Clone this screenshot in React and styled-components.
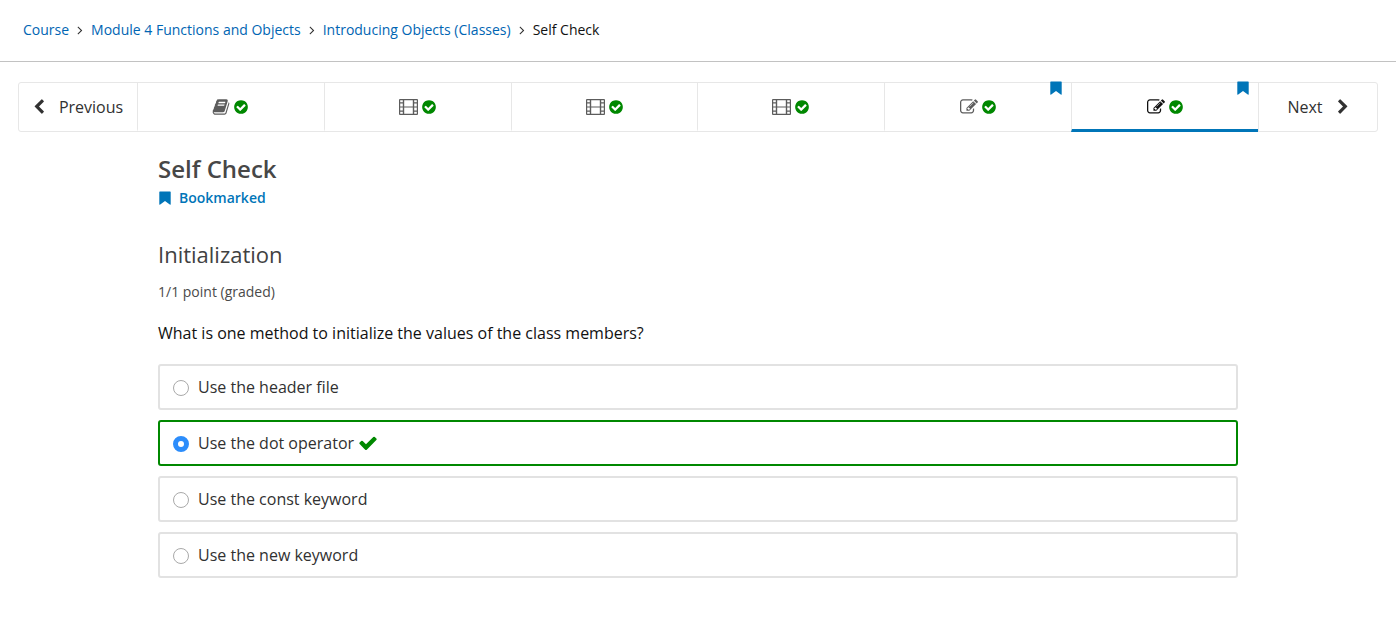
import React, { useState } from "react";
import styled, { createGlobalStyle } from "styled-components";

const GlobalStyle = createGlobalStyle`
  *, *::before, *::after { box-sizing: border-box; }
  body {
    margin: 0;
    background: #fff;
    color: #313131;
    font-family: "Open Sans", "Liberation Sans", sans-serif;
    font-size: 16px;
    line-height: 24px;
  }
`;

const PATHS = {
  check:
    "M1671 566q0 40-28 68l-724 724-136 136q-28 28-68 28t-68-28l-136-136-362-362q-28-28-28-68t28-68l136-136q28-28 68-28t68 28l294 295 656-657q28-28 68-28t68 28l136 136q28 28 28 68z",
  checkCircle:
    "M1412 734q0-28-18-46l-91-90q-19-19-45-19t-45 19l-408 407-226-226q-19-19-45-19t-45 19l-91 90q-18 18-18 46 0 27 18 45l362 362q19 19 45 19 27 0 46-19l543-543q18-18 18-45zm252 162q0 209-103 385.5t-279.5 279.5-385.5 103-385.5-103-279.5-279.5-103-385.5 103-385.5 279.5-279.5 385.5-103 385.5 103 279.5 279.5 103 385.5z",
  chevronLeft:
    "M1427 301l-531 531 531 531q19 19 19 45t-19 45l-166 166q-19 19-45 19t-45-19l-742-742q-19-19-19-45t19-45l742-742q19-19 45-19t45 19l166 166q19 19 19 45t-19 45z",
  chevronRight:
    "M1363 877l-742 742q-19 19-45 19t-45-19l-166-166q-19-19-19-45t19-45l531-531-531-531q-19-19-19-45t19-45l166-166q19-19 45-19t45 19l742 742q19 19 19 45t-19 45z",
  angleRight:
    "M1171 960q0 13-10 23l-466 466q-10 10-23 10t-23-10l-50-50q-10-10-10-23t10-23l393-393-393-393q-10-10-10-23t10-23l50-50q10-10 23-10t23 10l466 466q10 10 10 23z",
  edit:
    "M888 1184l116-116-152-152-116 116v56h96v96h56zm440-720q-16-16-33 1l-350 350q-17 17-1 33t33-1l350-350q17-17 1-33zm80 594v190q0 119-84.5 203.5t-203.5 84.5h-832q-119 0-203.5-84.5t-84.5-203.5v-832q0-119 84.5-203.5t203.5-84.5h832q63 0 117 25 15 7 18 23 3 17-9 29l-49 49q-14 14-32 8-23-6-45-6h-832q-66 0-113 47t-47 113v832q0 66 47 113t113 47h832q66 0 113-47t47-113v-126q0-13 9-22l64-64q15-15 35-7t20 29zm-96-738l288 288-672 672h-288v-288zm444 132l-92 92-288-288 92-92q28-28 68-28t68 28l152 152q28 28 28 68t-28 68z",
  book:
    "M1703 478q40 57 18 129l-275 906q-19 64-76.5 107.5t-122.5 43.5h-923q-77 0-148.5-53.5t-99.5-131.5q-24-67-2-127 0-4 3-27t4-37q1-8-3-21.5t-3-19.5q2-11 8-21t16.5-23.5 16.5-23.5q23-38 45-91.5t30-91.5q3-10 .5-30t-.5-28q3-11 17-28t17-23q21-36 42-92t25-90q1-9-2.5-32t.5-28q4-13 22-30.5t22-22.5q19-26 42.5-84.5t27.5-96.5q1-8-3-25.5t-2-26.5q2-8 9-18t18-23 17-21q8-12 16.5-30.5t15-35 16-36 19.5-32 26.5-23.5 36-11.5 47.5 5.5l-1 3q38-9 51-9h761q74 0 114 56t18 130l-274 906q-36 119-71.5 153.5t-128.5 34.5h-869q-27 0-38 15-11 16-1 43 24 70 144 70h923q29 0 56-15.5t35-41.5l300-987q7-22 5-57 38 15 59 43zm-1064 2q-4 13 2 22.5t20 9.5h608q13 0 25.5-9.5t16.5-22.5l21-64q4-13-2-22.5t-20-9.5h-608q-13 0-25.5 9.5t-16.5 22.5zm-83 256q-4 13 2 22.5t20 9.5h608q13 0 25.5-9.5t16.5-22.5l21-64q4-13-2-22.5t-20-9.5h-608q-13 0-25.5 9.5t-16.5 22.5z",
};

const Svg = styled.svg`
  display: block;
  flex: none;
  fill: currentColor;
`;

function Glyph({ name, size = 16 }) {
  return (
    <Svg width={size} height={size} viewBox="0 0 1792 1792" aria-hidden="true">
      <path d={PATHS[name]} />
    </Svg>
  );
}

function FilmIcon() {
  return (
    <Svg width="19" height="18" viewBox="0 0 19 18" aria-hidden="true">
      <path
        fillRule="evenodd"
        d="M1 1h17a1 1 0 0 1 1 1v14a1 1 0 0 1-1 1H1a1 1 0 0 1-1-1V2a1 1 0 0 1 1-1zM5.2 2.2v6.2h8.6V2.2zM5.2 9.6v6.2h8.6V9.6zM1.2 2.2v2h2.6v-2zM1.2 5.4v3h2.6v-3zM1.2 9.6v3h2.6v-3zM1.2 13.8v2h2.6v-2zM15.2 2.2v2h2.6v-2zM15.2 5.4v3h2.6v-3zM15.2 9.6v3h2.6v-3zM15.2 13.8v2h2.6v-2z"
      />
    </Svg>
  );
}

function BookmarkIcon() {
  return (
    <Svg width="12" height="14" viewBox="0 0 12 14" aria-hidden="true">
      <path d="M.9.4h10.2q.6 0 .6.6v12.3q0 .6-.6.4L6 9.9.9 13.7q-.6.2-.6-.4V1Q.3.4.9.4z" />
    </Svg>
  );
}

const Header = styled.header`
  padding: 18px 23px 19px;
  border-bottom: 1px solid #c2c2c2;
`;

const Crumbs = styled.ol`
  display: flex;
  flex-wrap: wrap;
  margin: 0;
  padding: 0;
  list-style: none;
  font-size: 14px;
  color: #111;
`;

const Crumb = styled.li`
  display: flex;
  align-items: center;
`;

const CrumbLink = styled.a`
  color: #0065b3;
  text-decoration: none;
`;

const CrumbSeparator = styled.span`
  display: flex;
  padding: 0 4px;
  color: #313131;
`;

const Sequence = styled.nav`
  display: flex;
  height: 50px;
  margin: 20px 18px 0;
  border: 1px solid #e7e7e7;
  border-radius: 3px;
`;

const SequenceButton = styled.button`
  display: flex;
  align-items: center;
  justify-content: center;
  gap: 12px;
  width: 118px;
  flex: none;
  padding: ${(p) => (p.$next ? "0 0 0 2px" : "0 2px 0 0")};
  border: 0;
  background: none;
  color: #313131;
  font: inherit;
  cursor: pointer;
`;

const Units = styled.ol`
  display: flex;
  flex: 1;
  margin: -1px 0;
  padding: 0;
  list-style: none;
  border-right: 1px solid #e7e7e7;
`;

const Unit = styled.li`
  display: flex;
  flex: 1 1 0;
  position: relative;
`;

const UnitButton = styled.button`
  display: flex;
  flex: 1;
  align-items: center;
  justify-content: center;
  gap: 3px;
  padding: 3px 0 0;
  border: 0;
  border-left: 1px solid #e7e7e7;
  border-bottom: 3px solid ${(p) => (p.$active ? "#0075b8" : "transparent")};
  background: none;
  color: ${(p) => (p.$active ? "#111" : "#5c5c5c")};
  font: inherit;
  cursor: pointer;
`;

const Correct = styled.span`
  display: flex;
  color: #008800;
`;

const UnitFlag = styled.span`
  position: absolute;
  top: -1px;
  right: 9px;
  color: #0075b8;
`;

const Content = styled.main`
  max-width: 1120px;
  margin: 0 auto;
  padding: 20px 20px 44px;
`;

const Title = styled.h2`
  margin: 0;
  color: #474747;
  font-size: 24px;
  font-weight: 600;
  line-height: 34px;
`;

const BookmarkButton = styled.button`
  display: flex;
  align-items: center;
  gap: 8px;
  padding: 0 1px;
  border: 0;
  background: none;
  color: #0075b8;
  font: inherit;
  font-size: 14px;
  font-weight: 600;
  cursor: pointer;
`;

const ProblemTitle = styled.h3`
  margin: 28px 0 0;
  color: #414141;
  font-size: 22px;
  font-weight: 400;
  line-height: 32px;
`;

const Progress = styled.p`
  margin: 10px 0 0;
  color: #4a4a4a;
  font-size: 14px;
`;

const Question = styled.fieldset`
  display: flex;
  flex-direction: column;
  gap: 10px;
  margin: 17px 0 0;
  padding: 0;
  border: 0;
  min-width: 0;
`;

const Legend = styled.legend`
  margin-bottom: 19px;
  padding: 0;
  color: #111;
`;

const Choice = styled.label`
  display: flex;
  align-items: center;
  height: 46px;
  padding: 0 13px;
  border: 2px solid ${(p) => (p.$correct ? "#008800" : "#e2e2e2")};
  border-radius: 3px;
  cursor: pointer;
`;

const Radio = styled.input`
  appearance: none;
  flex: none;
  width: 16px;
  height: 16px;
  margin: 2px 9px 0 0;
  border: 1px solid #a9a9a9;
  border-radius: 50%;
  background: #fff;
  &:checked {
    border: 5px solid #2c8dfb;
  }
`;

const ChoiceMark = styled(Correct)`
  margin-left: 4px;
`;

const CRUMBS = ["Course", "Module 4 Functions and Objects", "Introducing Objects (Classes)"];

const UNITS = [
  { label: "Reading", icon: <Glyph name="book" size={18} /> },
  { label: "Video 1", icon: <FilmIcon /> },
  { label: "Video 2", icon: <FilmIcon /> },
  { label: "Video 3", icon: <FilmIcon /> },
  { label: "Exercise", icon: <Glyph name="edit" size={18} />, flagged: true },
  { label: "Self Check", icon: <Glyph name="edit" size={18} />, flagged: true },
];

const CHOICES = [
  "Use the header file",
  "Use the dot operator",
  "Use the const keyword",
  "Use the new keyword",
];

export default function App() {
  const [unit, setUnit] = useState(5);
  const [answer, setAnswer] = useState(1);
  return (
    <>
      <GlobalStyle />
      <Header>
        <Crumbs>
          {CRUMBS.map((text) => (
            <Crumb key={text}>
              <CrumbLink href="#">{text}</CrumbLink>
              <CrumbSeparator>
                <Glyph name="angleRight" size={14} />
              </CrumbSeparator>
            </Crumb>
          ))}
          <Crumb aria-current="page">Self Check</Crumb>
        </Crumbs>
      </Header>
      <Sequence aria-label="Sequence">
        <SequenceButton type="button" onClick={() => setUnit(Math.max(0, unit - 1))}>
          <Glyph name="chevronLeft" />
          Previous
        </SequenceButton>
        <Units>
          {UNITS.map((item, i) => (
            <Unit key={item.label}>
              <UnitButton
                type="button"
                aria-label={item.label}
                $active={i === unit}
                onClick={() => setUnit(i)}
              >
                {item.icon}
                <Correct>
                  <Glyph name="checkCircle" />
                </Correct>
              </UnitButton>
              {item.flagged && (
                <UnitFlag>
                  <BookmarkIcon />
                </UnitFlag>
              )}
            </Unit>
          ))}
        </Units>
        <SequenceButton type="button" $next onClick={() => setUnit(Math.min(5, unit + 1))}>
          Next
          <Glyph name="chevronRight" />
        </SequenceButton>
      </Sequence>
      <Content>
        <Title>Self Check</Title>
        <BookmarkButton type="button">
          <BookmarkIcon />
          Bookmarked
        </BookmarkButton>
        <ProblemTitle>Initialization</ProblemTitle>
        <Progress>1/1 point (graded)</Progress>
        <Question>
          <Legend>What is one method to initialize the values of the class members?</Legend>
          {CHOICES.map((text, i) => (
            <Choice key={text} $correct={i === 1}>
              <Radio
                type="radio"
                name="answer"
                checked={answer === i}
                onChange={() => setAnswer(i)}
              />
              {text}
              {i === 1 && (
                <ChoiceMark>
                  <Glyph name="check" size={20} />
                </ChoiceMark>
              )}
            </Choice>
          ))}
        </Question>
      </Content>
    </>
  );
}
